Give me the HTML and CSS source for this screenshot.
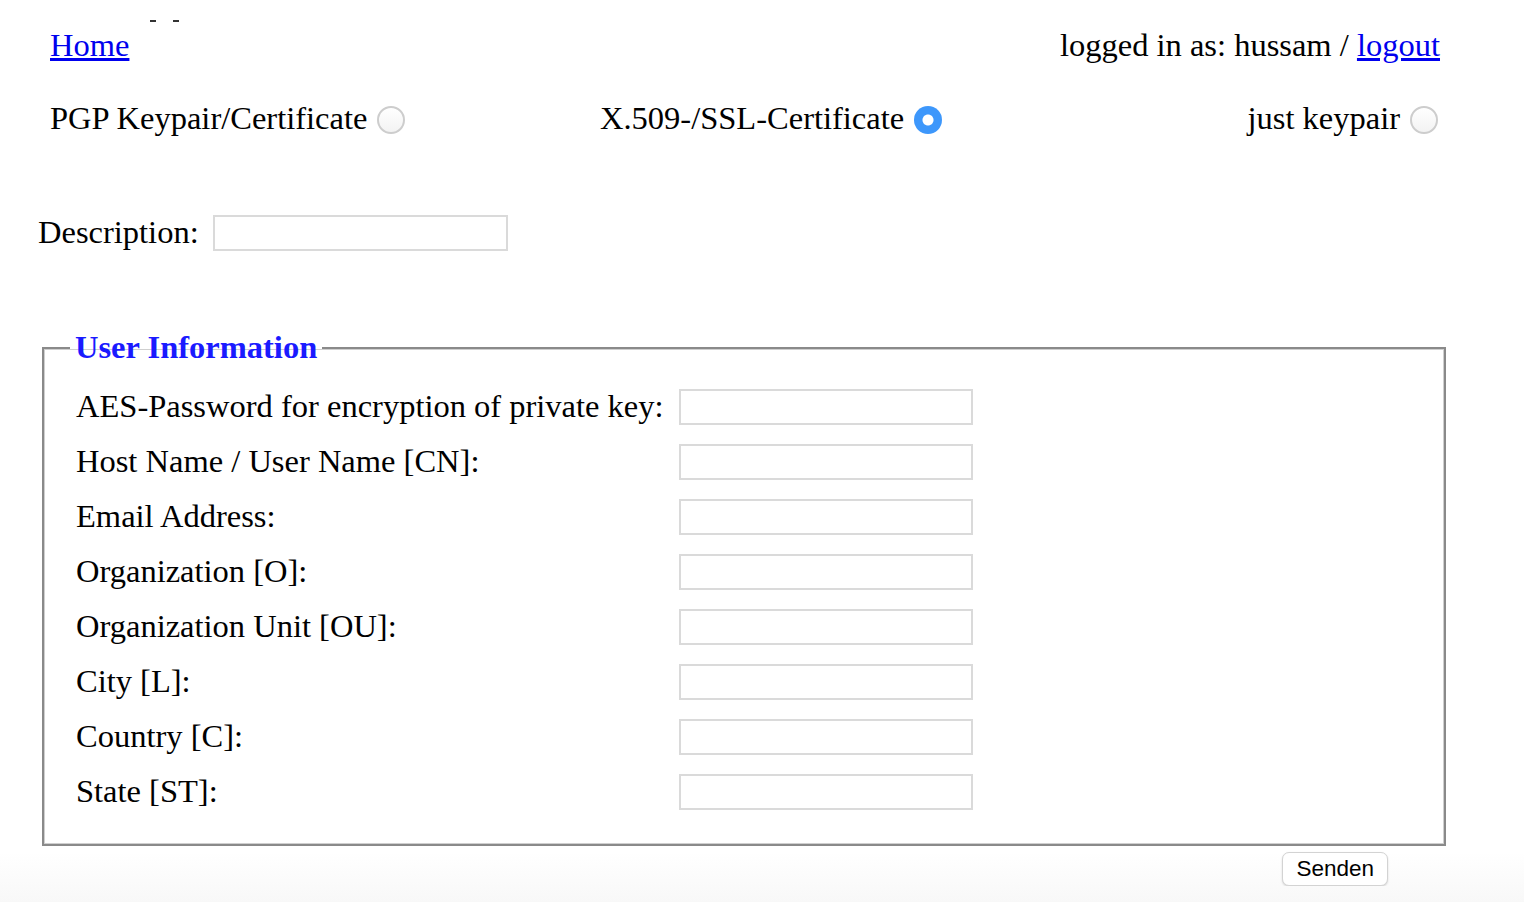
FILE: index.html
```html
<!DOCTYPE html>
<html lang="en">
<head>
<meta charset="utf-8">
<title>Create Certificate</title>
<link rel="stylesheet" href="styles.css">
</head>
<body>
<div class="marks"><span class="mark"></span><span class="mark"></span></div>
<header class="topbar">
  <a href="#" class="link">Home</a>
  <span class="login">logged in as: hussam / <a href="#" class="link">logout</a></span>
</header>
<form class="form">
  <div class="choices">
    <label class="choice">PGP Keypair/Certificate <input type="radio" name="kind" class="radio"></label>
    <label class="choice">X.509-/SSL-Certificate <input type="radio" name="kind" class="radio" checked></label>
    <label class="choice choice-right">just keypair <input type="radio" name="kind" class="radio"></label>
  </div>
  <div class="desc">
    <label class="desc-label">Description:</label>
    <input type="text" class="field desc-field">
  </div>
  <fieldset class="box">
    <legend class="legend">User Information</legend>
    <div class="grid">
      <label class="lbl">AES-Password for encryption of private key:</label><input type="password" class="field">
      <label class="lbl">Host Name / User Name [CN]:</label><input type="text" class="field">
      <label class="lbl">Email Address:</label><input type="text" class="field">
      <label class="lbl">Organization [O]:</label><input type="text" class="field">
      <label class="lbl">Organization Unit [OU]:</label><input type="text" class="field">
      <label class="lbl">City [L]:</label><input type="text" class="field">
      <label class="lbl">Country [C]:</label><input type="text" class="field">
      <label class="lbl">State [ST]:</label><input type="text" class="field">
    </div>
  </fieldset>
  <div class="actions">
    <button type="submit" class="btn">Senden</button>
  </div>
</form>
</body>
</html>
```
FILE: styles.css
```css
html {
  background: linear-gradient(to bottom, #ffffff 0, #ffffff 852px, #f8f8f8 902px);
  min-height: 100%;
}
body {
  margin: 0;
  font-family: "Liberation Serif", "Times New Roman", serif;
  font-size: 32.5px;
  line-height: 37px;
  color: #000;
}
.marks {
  display: flex;
  gap: 17px;
  padding-left: 150px;
  height: 22px;
  align-items: flex-end;
}
.mark {
  display: block;
  width: 6px;
  height: 2px;
  background: #333;
}
.topbar {
  display: flex;
  justify-content: space-between;
  padding: 5px 84px 0 50px;
}
.link {
  color: #0000ee;
  text-decoration: underline;
}
.form {
  margin: 0;
}
.choices {
  display: grid;
  grid-template-columns: 550px 1fr auto;
  padding: 36px 86px 0 50px;
}
.choice {
  display: flex;
  align-items: center;
}
.choice-right {
  justify-self: end;
}
.radio {
  appearance: none;
  -webkit-appearance: none;
  width: 28px;
  height: 28px;
  margin: 2px 0 0 10px;
  border-radius: 50%;
  border: 2px solid #cdcdcd;
  background: linear-gradient(to bottom, #ffffff, #f3f3f3);
  box-sizing: border-box;
}
.radio:checked {
  border: none;
  background: radial-gradient(circle, #ffffff 0, #ffffff 5px, #3d97fb 6px);
}
.desc {
  display: flex;
  align-items: flex-start;
  gap: 14px;
  padding: 77px 0 0 38px;
}
.desc-label {
  display: block;
}
.field {
  width: 295px;
  height: 36px;
  box-sizing: border-box;
  border: 2px solid #dadada;
  background: #fff;
  margin: 0;
  padding: 0 6px;
  font-size: 28px;
}
.desc-field {
  margin-top: 1px;
}
.box {
  margin: 78px 0 0 42px;
  width: 1404px;
  box-sizing: border-box;
  border: 2px solid #8a8a8a;
  box-shadow: inset 1px 1px 0 #cfcfcf, inset -1px -1px 0 #cfcfcf;
  padding: 22px 20px 34px 32px;
}
.legend {
  color: #1a1aff;
  font-weight: bold;
  padding: 0 5px;
  margin-left: -6px;
  line-height: 37px;
}
.grid {
  display: grid;
  grid-template-columns: 603px 294px;
  justify-content: start;
  row-gap: 18px;
  align-items: center;
}
.lbl {
  display: block;
  white-space: nowrap;
}
.grid .field {
  width: 294px;
}
.actions {
  display: flex;
  justify-content: flex-end;
  padding: 6px 136px 0 0;
}
.btn {
  font-family: "Liberation Sans", Arial, sans-serif;
  font-size: 22.5px;
  line-height: 26px;
  height: 34px;
  padding: 0 13px;
  border: 1px solid #d3d3d3;
  border-radius: 7px;
  background: #fff;
  box-shadow: 0 1px 2px rgba(0, 0, 0, 0.15);
  color: #000;
}
```
